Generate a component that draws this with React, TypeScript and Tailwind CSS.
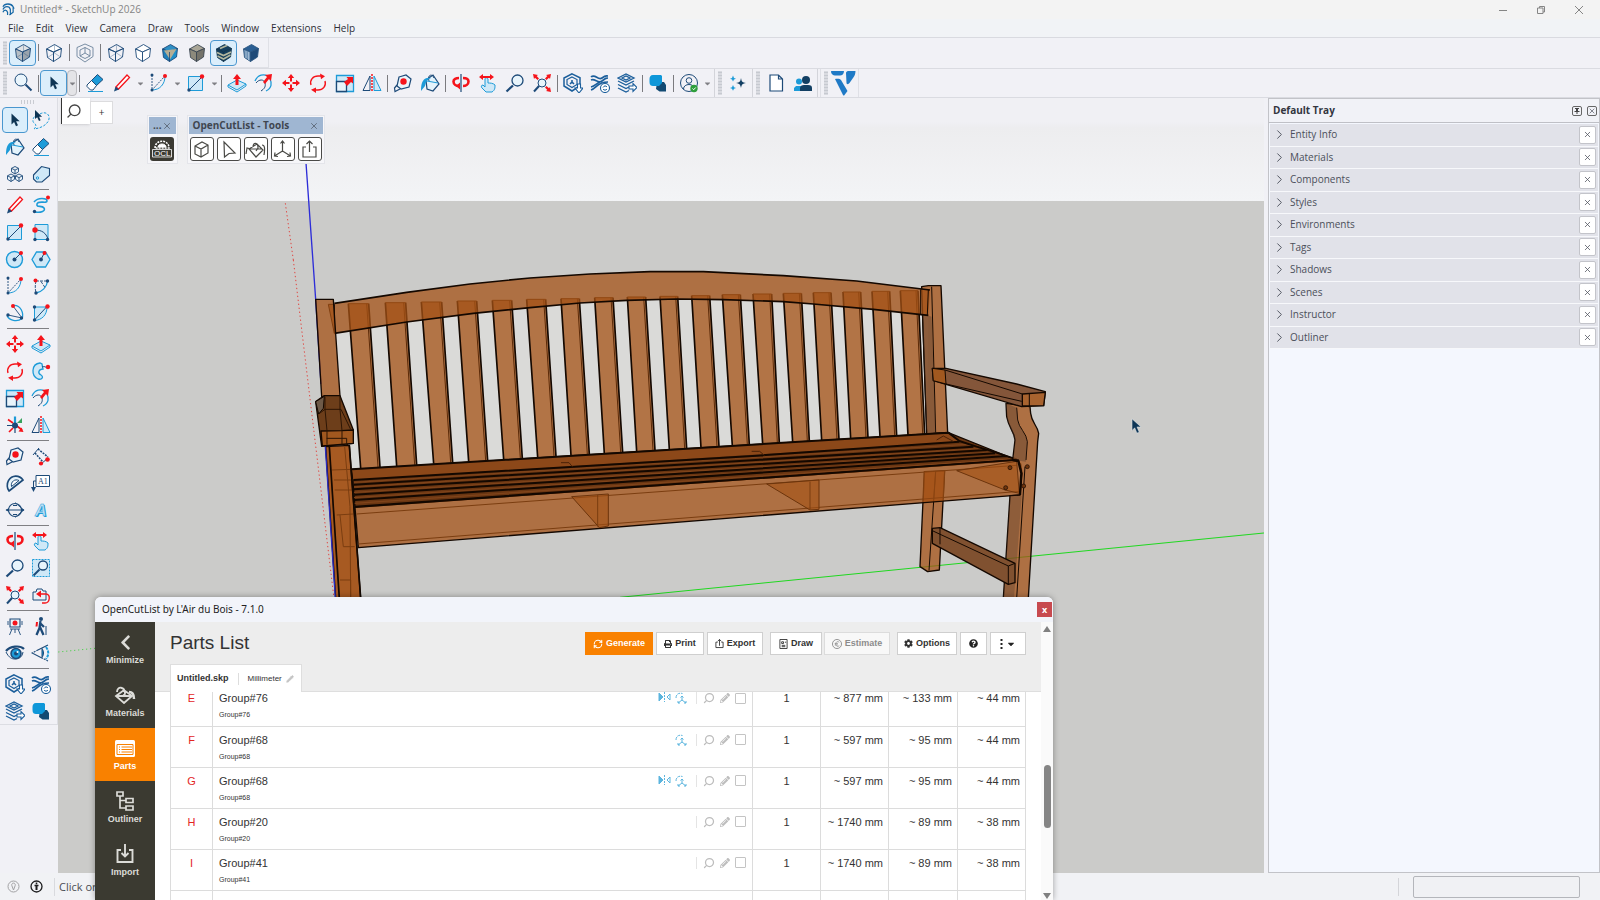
import React from "react";
import { ChevronRight, Pencil, RefreshCw, Search, X } from "lucide-react";
import { FaCaretDown, FaChevronLeft, FaCog, FaPencilAlt, FaPrint, FaQuestionCircle } from "react-icons/fa";

const NAVY = "#1d4a78";
const SKY = "#1d9bd8";
const PALE = "#cfe8f7";
const RED = "#f5141b";
const GREY = "#4a4a46";

function Cube({ top = "none", left = "none", right = "none", hidden = false, stroke = NAVY }) {
  return (
    <g stroke={stroke} strokeLinejoin="round" strokeWidth="0.9">
      <path d="M2.5 6 10.5 1.5 17.5 5.5 9.5 9Z" fill={top} />
      <path d="M2.5 6 9.5 9 9.5 18.5 3.5 14.5Z" fill={left} />
      <path d="M9.5 9 17.5 5.5 16.5 14 9.5 18.5Z" fill={right} />
      {hidden && <path d="M10.500 1.500V10L3.500 14.500M10.500 10l6 4" strokeWidth="0.5" opacity="0.7" fill="none" />}
    </g>
  );
}

function Dot({ x, y, c = NAVY, r = 1.7 }: { x: number; y: number; c?: string; r?: number }) {
  return <circle cx={x} cy={y} r={r} fill={c} stroke="none" />;
}

const ARROW = "M6.5 3.5v11l2.6-2.4 1.9 4.2 2-1-1.9-4h3.6Z";
const LENS = "M8 12.5 1.5 18.5";

const ICONS: Record<string, React.ReactNode> = {
  shaded: <Cube top="#dfe3e6" left="#b7bec4" right="#9aa4ad" hidden />,
  hiddenEdges: <Cube top="#fff" hidden />,
  xray: (
    <g stroke="#6b829b" strokeWidth="0.9">
      <path d="M10 1 18 4.500V13.500L10 19 2 13.500V4.500Z" />
      <path d="M10 4.500 15 7v6L10 15.500 5 13V7ZM10 4.500V10M10 10l5 3M10 10l-5 3" />
    </g>
  ),
  wireframe: <Cube hidden />,
  hiddenLine: <Cube top="#fff" left="#fff" right="#fff" />,
  textures: (
    <g>
      <Cube top="#2f8fc4" left="#1f7fb9" right="#1f8fca" />
      <path d="M4 7.500 16.500 6 10 16.500Z" fill="#b3ad94" />
      <path d="M9.500 9v9" stroke={NAVY} strokeWidth="0.800" />
    </g>
  ),
  monochrome: <Cube top="#a9a596" left="#8d8a7c" right="#75736a" stroke="#3c4752" />,
  striped: (
    <g>
      <Cube top="#16405e" left="#16405e" right="#16405e" stroke="#12364f" />
      <path d="M3 9.500 9.500 12.500 17 9M3.500 13l6 3 7-4M6 5.500l7-3" stroke="#b4b89f" strokeWidth="1.700" />
    </g>
  ),
  faded: (
    <g>
      <Cube top="#2b5f94" left="#6f93b6" right="#1f4a78" stroke="#2b5680" />
      <path d="M5 8v7M7.500 9v8" stroke="#9fb9d2" />
    </g>
  ),
  search: (
    <g stroke={NAVY}>
      <circle cx="8" cy="7" r="6" fill="#eaf5fc" />
      <path d="m12.500 11.500 6 6" strokeWidth="2" />
    </g>
  ),
  select: <path d={ARROW} fill="#0f3554" stroke="none" />,
  lasso: (
    <g>
      <path d="M9 4c5-3 10 0 9 5s-7 9-15 10c2-2 3-4 0-6-2-2-1-5 1-7" stroke={SKY} strokeDasharray="2.500 1.500" />
      <path d="M4 0v9l2.200-1.800L8 11l1.600-.8-1.500-3.400h3Z" fill="#0f3554" stroke="none" />
    </g>
  ),
  eraser: (
    <g>
      <path d="m2 12 4.500-4.500 5 5L8 17H5.500L2 13.500Z" fill="#fff" stroke={NAVY} />
      <path d="m6.500 7.500 6-6 5.500 5-6.500 6Z" fill={SKY} stroke={NAVY} />
      <path d="M3 18.500h15" stroke={SKY} />
    </g>
  ),
  line: (
    <g>
      <path d="m4 14 11-12 2.500 2.500L6.500 16Z" fill="#fff" stroke={RED} strokeWidth="1.300" />
      <path d="M2 18.500 3.500 13.500 7 16.500Z" fill={NAVY} stroke="none" />
    </g>
  ),
  freehand: (
    <g>
      <path d="M4 17c6 1 11-1 9-4S5 13 6 9s10 0 10-3-9-4-13 1" stroke={SKY} strokeWidth="1.600" />
      <Dot x={17} y={2.5} c={RED} r={2} />
      <Dot x={3.5} y={16.5} />
    </g>
  ),
  arc: (
    <g>
      <path d="M3 2v15L16 3" stroke={NAVY} strokeWidth="0.900" strokeDasharray="2 1" />
      <path d="M3 17c8 0 13-6 13-14" stroke={SKY} />
      <Dot x={3} y={2} r={1.5} />
      <Dot x={3} y={17} r={1.5} />
      <Dot x={16} y={3} c={RED} r={2} />
    </g>
  ),
  rectangle: (
    <g>
      <path d="M2.500 3.500h14v14h-14Z" fill={PALE} stroke={SKY} />
      <path d="M3 17 16 4" stroke={NAVY} />
      <Dot x={3} y={17} />
      <Dot x={16} y={3.5} c={RED} r={2.2} />
    </g>
  ),
  rotatedRect: (
    <g>
      <path d="M4 2.500h13v15H4Z" fill={PALE} stroke={SKY} />
      <path d="M4 8c7 0 11 3 13 9" stroke={NAVY} />
      <Dot x={4} y={8} c={RED} r={2.7} />
      <Dot x={4} y={17.5} />
      <Dot x={16.5} y={17.5} />
    </g>
  ),
  circle: (
    <g>
      <circle cx="9.500" cy="10.500" r="8" fill={PALE} stroke={SKY} strokeWidth="1.400" />
      <path d="m9.500 10.500 6-6" stroke={NAVY} />
      <Dot x={9.5} y={10.5} r={2} />
      <Dot x={16} y={4} c={RED} r={2} />
    </g>
  ),
  polygon: (
    <g>
      <path d="M5.500 3h9L19 10.500 14.500 18h-9L1 10.500Z" fill={PALE} stroke={SKY} strokeWidth="1.300" />
      <path d="m10 10.500 3-6" stroke={NAVY} />
      <Dot x={10} y={10.5} r={1.9} />
      <Dot x={13.5} y={4} c={RED} r={2} />
    </g>
  ),
  arc2: (
    <g>
      <path d="M16.500 5C16 11 11 16 5 17" stroke={SKY} strokeWidth="1.300" />
      <path d="m5 5 11.500 0M5 5c-1 4-1 8 0 12M10 5.500l4 6" stroke={NAVY} strokeWidth="0.900" strokeDasharray="3 1" />
      <Dot x={4.5} y={4.5} c={RED} r={2} />
      <Dot x={16.5} y={5} />
      <Dot x={5} y={17} />
    </g>
  ),
  arc3: (
    <g>
      <path d="M8 2.500c8-1 11 8 9 13-5 4-13 2-15-3" stroke={SKY} strokeWidth="1.300" />
      <path d="m8 3 9 12M3 12l14 3" stroke={NAVY} strokeWidth="0.900" />
      <Dot x={8} y={3} c={RED} r={2} />
      <Dot x={3} y={12} />
      <Dot x={16.5} y={15} />
    </g>
  ),
  pie: (
    <g>
      <path d="M3.500 4H16c0 8-5 13-12.500 13.500Z" fill={PALE} stroke={SKY} />
      <path d="m3.500 17 12-13" stroke={NAVY} />
      <Dot x={3.5} y={4} />
      <Dot x={3.5} y={17} />
      <Dot x={16.5} y={3.5} c={RED} r={2.2} />
    </g>
  ),
  pushPull: (
    <g>
      <path d="m1 12 9-5 9 4-9 6Z" fill={PALE} stroke={SKY} />
      <path d="M1 12v2l9 5 9-6V11" stroke={SKY} />
      <path d="M10 1 14 6h-2.500v6h-3V6H6Z" fill={RED} stroke="none" />
    </g>
  ),
  followMe: (
    <g>
      <path d="M9 2C0 3 0 15 7 18c4 1 6-2 3-4-4-2-2-6 2-6l-1-5Z" fill={PALE} stroke={SKY} strokeWidth="1.300" />
      <path d="M11 6c2-1 4 0 5 1" stroke={NAVY} />
      <Dot x={17} y={6} c={RED} r={2.2} />
    </g>
  ),
  offset: (
    <g>
      <path d="M1 8C4 1 10 1 14 3M12 18c6-3 6-8 4-12" stroke={SKY} strokeWidth="1.300" />
      <path d="M2 10c3-4 8-4 9 0s-1 6-4 8" stroke={NAVY} />
      <path d="m9 9 4-5-2-2 7-1-1 7-2-2-4 5Z" fill={RED} stroke="none" />
    </g>
  ),
  move: (
    <path
      d="m10 1 3.200 4H11v3.500H9V5H6.800ZM10 19l3.200-4H11v-3.500H9V15H6.800ZM1 10l4-3.200V9h3.500v2H5v2.200ZM19 10l-4-3.200V9h-3.500v2H15v2.200Z"
      fill={RED}
      stroke="none"
    />
  ),
  rotate: (
    <g stroke={RED} strokeWidth="1.400">
      <path d="M3 12C1.500 7 5 3 10 3h3M17 8c1.500 5-2 9-7 9H7" />
      <path d="m12 .5 5 2.800-4 3ZM8 14.500l-5 2.200L8 20Z" fill={RED} stroke="none" />
    </g>
  ),
  scale: (
    <g>
      <path d="M1.500 2.500h17v16h-17Z" fill={PALE} stroke={SKY} strokeWidth="1.300" />
      <path d="M1.500 8.500h10v10h-10Z" fill="#e9f4fb" stroke={NAVY} strokeWidth="1.300" />
      <path d="m9 9 4-3-1.500-2H18v6.500L16 9l-4 4Z" fill={RED} stroke="none" />
    </g>
  ),
  flip: (
    <g>
      <path d="M8 3v14.500H1Z" stroke={NAVY} />
      <path d="M12 3v14.500h7Z" stroke={SKY} fill={PALE} />
      <path d="M10 1v18" stroke={RED} strokeWidth="1.500" strokeDasharray="2 1" />
    </g>
  ),
  tape: (
    <g>
      <path d="M6 4 13 2l5 4-2 8-8 2-4-3Z" fill="#e9f4fb" stroke={NAVY} strokeWidth="1.200" />
      <path d="M4 12 1.500 15 2 18.500 7 16" stroke={NAVY} strokeWidth="1.200" />
      <Dot x={10.5} y={8.5} c={RED} r={3.2} />
    </g>
  ),
  paint: (
    <g>
      <path d="m6 7 7-5 6 9-6 7-6-2Z" fill="#e4f3fc" stroke={NAVY} strokeWidth="1.200" />
      <path d="M9 8C7 2 12 0 14 5" stroke={NAVY} />
      <path d="M1 18C1 8 4 4 11 5c-5 2-5 5-6 8Z" fill={SKY} stroke="none" />
      <path d="m7 8 11 2" stroke={SKY} />
    </g>
  ),
  orbit: (
    <g>
      <path d="M8 5C5 5 2.500 6 2.500 8.500S5 13 8 13M12 5c3 0 5.500 1 5.500 3.500S15 13 12 13" stroke={RED} strokeWidth="2.600" />
      <path d="m9 9.500 0 7-4-3.500Z" fill={RED} stroke="none" />
      <path d="M10 1v18" stroke={NAVY} strokeWidth="1.200" />
    </g>
  ),
  pan: (
    <g>
      <path d="M7 6v8l-2-2c-2 0-2 2-1 3l4 4h6c3-2 3-4 3-7-2-2-5-2-7-2V6c-1-2-3-1-3 0Z" fill={PALE} stroke={SKY} />
      <path d="m1 4 4-3v2h7V1l4 3-4 3V5H5v2Z" fill={RED} stroke="none" />
    </g>
  ),
  zoom: (
    <g stroke={NAVY}>
      <circle cx="12.500" cy="7.500" r="5.500" fill="#e8f4fb" strokeWidth="1.300" />
      <path d={LENS} strokeWidth="2.200" />
    </g>
  ),
  zoomWindow: (
    <g stroke={NAVY}>
      <path d="M1.500 1.500h17v17h-17Z" fill={PALE} stroke={SKY} strokeDasharray="2 1" />
      <circle cx="12" cy="7.500" r="4.500" fill="#e8f4fb" strokeWidth="1.300" />
      <path d="m8.500 11.500-6 6" strokeWidth="2" />
    </g>
  ),
  zoomExtents: (
    <g>
      <circle cx="10" cy="10" r="4" fill="#e8f4fb" stroke={NAVY} />
      <path d="m7 13-5 5.500" stroke={NAVY} strokeWidth="2" />
      <path d="m1 1 5 1-1.300 1L7 5.500 5.500 7 3 4.700 2 6ZM19 1l-5 1 1.300 1L13 5.500 14.500 7 17 4.700 18 6ZM19 19l-5-1 1.300-1L13 14.500l1.500-1.500 2.500 2.300 1-1.300Z" fill={RED} stroke="none" />
    </g>
  ),
  warehouse: (
    <g stroke="#1b5e9b" strokeWidth="1.500">
      <path d="m9 .8 8 4v8L9 18 1 13V5Z" />
      <path d="m9 4 5 2.500v5L9 14.500 4 11.500v-5Z" strokeWidth="1.200" />
      <path d="M9 7v2l2 2M9 9l-2 2" />
      <path d="M14.500 11h3v4H20l-4 5-4-5h2.500Z" fill="#fff" strokeWidth="1.100" />
    </g>
  ),
  extensions: (
    <g stroke="#1b5e9b" strokeWidth="1.700">
      <path d="M1 4c4-4 7 4 11 1s4-2 6-2M1 7c4-2 7 4 11 1s4-3 6-3M1 17c6-2 6-8 17-8M1 14c4-1 6-4 9-5" />
      <circle cx="15" cy="15" r="4.500" fill="#fff" strokeWidth="1.100" />
      <path d="M13 14.500c1-2 3-2 4-.5M17 16c-1 1.500-3 1.500-4 0" strokeWidth="1" />
    </g>
  ),
  layout: (
    <g stroke="#1b5e9b" strokeWidth="1.300">
      <path d="m1 5 8-4 8 4-8 4ZM1 8l8 4 8-4M1 11.500l8 4 3-1.500M1 15l8 4 3-1.500M5 5l4-2 4 2-4 2Z" />
      <path d="M12 13h4v-2.500l4 4-4 4V16h-4Z" fill="#fff" strokeWidth="1.100" />
    </g>
  ),
  chat: (
    <g stroke="none">
      <path d="M9 9h7l2 3v6.500h-6.500L8 16Z" fill="#124a73" />
      <path d="M5 2h8l1 1v7l-3 3H5c-2 0-3.500-1-3.500-4V6c0-2 1-4 3.500-4Z" fill="#0e97d9" />
    </g>
  ),
  account: (
    <g stroke={NAVY}>
      <circle cx="10" cy="10" r="8.500" />
      <circle cx="10" cy="7.500" r="2.800" />
      <path d="M4.500 16c0-6 11-6 11 0" />
      <circle cx="15" cy="15.500" r="3.700" fill="#2e9e3c" stroke="none" />
      <path d="m13.500 15.500 1.200 1.200 2-2.200" stroke="#fff" />
    </g>
  ),
  sparkle: (
    <g stroke="none">
      <path d="M13 5c.7 4 1.500 4.500 5 5-3.500.7-4.300 1.300-5 5-.7-3.700-1.500-4.300-5-5 3.500-.5 4.300-1 5-5Z" fill="#123f63" />
      <path d="M5 2.500 6 5l2 .8-2 .8-1 2-1-2-2-.8L4 5ZM5 12l1 2.200 2 .8-2 .8-1 2-1-2-2-.8 2-.8Z" fill={SKY} />
    </g>
  ),
  page: <path d="M4 2h8.500L16.500 6v12H4ZM12.500 2v4h4" stroke={NAVY} strokeWidth="1.200" fill="#fff" />,
  people: (
    <g stroke="none">
      <circle cx="6" cy="8.500" r="3" fill={SKY} />
      <path d="M1 18v-3l2-2h5v5Z" fill={SKY} />
      <circle cx="13" cy="7" r="4" fill="#123f63" />
      <path d="M7 18v-3c0-2 2-3 4-3h4c3 0 4 1 4 3v3Z" fill="#123f63" />
    </g>
  ),
  components: (
    <g stroke={NAVY} strokeWidth="0.900">
      {["M10 2.500", "M6 10", "M14 10"].map((at) => (
        <path key={at} d={`${at}l3.500 1.800v3.500l-3.500 2.200-3.500-2.200v-3.500Zm-3.500 1.800 3.500 1.800 3.500-1.800m-3.500 1.800v3.900`} fill="#e8f1f8" />
      ))}
    </g>
  ),
  tag: (
    <g>
      <path d="m2.500 11 8-8.500 8 2v7l-7.500 6.500H5.500l-3-3Z" fill={PALE} stroke={NAVY} strokeWidth="1.100" />
      <circle cx="6.500" cy="14" r="1.200" stroke={SKY} />
    </g>
  ),
  axes: (
    <g>
      <path d="M10 9V1.500" stroke={SKY} strokeWidth="2.200" />
      <path d="m12 8 5-5v5Z" fill="#37a35d" stroke="none" />
      <path d="m12 11 5 4M8 8 3 4.500M8 13l-4 4" stroke={RED} strokeWidth="1.700" />
      <path d="m18.500 17-5-.500 3-4Z" fill={RED} stroke="none" />
      <path d="M2 10.500h6M10 13v5" stroke={NAVY} strokeWidth="1.200" />
      <Dot x={10} y={10.5} r={3} />
    </g>
  ),
  dimension: (
    <g>
      <path d="M2 9 8 2M10 18l7-6" stroke={NAVY} />
      <path d="m4 7 8 9M7 3l10 8" stroke={NAVY} strokeWidth="1.500" strokeDasharray="2 1" />
      <Dot x={16.5} y={13.5} c={RED} r={2.3} />
      <Dot x={10} y={17.5} c={RED} r={2.1} />
    </g>
  ),
  protractor: (
    <g stroke={NAVY}>
      <path d="M4 18 18 7C14 1.500 7 2 3.500 7.500 1.500 11 2 15.500 4 18Z" fill="#e8f4fb" strokeWidth="1.600" />
      <path d="M6.500 13.500 14 7.500C10 5.500 5.500 8.500 6.500 13.500Z" fill="#fff" />
    </g>
  ),
  label: (
    <g>
      <path d="M5 2.500h13.500v11H5Z" fill="#fff" stroke={NAVY} />
      <path d="M5 8H2.500v8" stroke={NAVY} />
      <path d="m0 14 2.500 5L5 14Z" fill={NAVY} stroke="none" />
      <text x="7" y="11" fontSize="8" fontFamily="Liberation Serif, serif" fill={NAVY} stroke="none">A1</text>
    </g>
  ),
  section: (
    <g stroke={NAVY}>
      <circle cx="10" cy="10" r="6.500" strokeWidth="1.100" />
      <path d="M1 10h18M8 5.500h4M8 14.500h4" />
      <path d="M10 2.500 18.500 10 10 17.500" strokeWidth="0.800" />
      <path d="m16 7.500 3.500 2.500-3.500 2.500ZM4 8v4l-3.500-2Z" fill={NAVY} stroke="none" />
    </g>
  ),
  text3d: (
    <g fontSize="16" fontWeight="700" fontStyle="italic" fontFamily="Liberation Sans, sans-serif">
      <text x="5" y="17" fill={SKY}>A</text>
      <text x="4" y="16" fill="#bfe2f5" stroke={SKY} strokeWidth="0.500">A</text>
    </g>
  ),
  previous: (
    <g>
      <path d="M2 7h3l1-3h5l1 2h3v9H2Z" fill="#e8f1f8" stroke={NAVY} />
      <path d="M9 9h6c5 0 4 9-1 9h-3" stroke={RED} strokeWidth="1.400" />
      <path d="m10 5.500-5 3.500 5 3.500Z" fill={RED} stroke="none" />
    </g>
  ),
  camera: (
    <g>
      <path d="M5 3h10v8H5Z" fill="#e8f1f8" stroke={NAVY} strokeWidth="1.100" />
      <path d="M5 13h10M10 13v4M7 13l-2.500 6M13 13l2.500 6M3 5v4M17 5v4" stroke={NAVY} strokeWidth="0.900" />
      <Dot x={10} y={7} c={RED} r={2.5} />
    </g>
  ),
  walk: (
    <g>
      <circle cx="10" cy="3" r="2" fill={NAVY} stroke="none" />
      <path d="M9.500 5 8.500 12l-3 7M9 11l3.500 8M9 7l4 4" stroke={NAVY} strokeWidth="2.300" />
      <path d="M15 10v9" stroke={NAVY} />
      <path d="M6 6 5.500 10.500" stroke={RED} strokeWidth="2" />
    </g>
  ),
  look: (
    <g>
      <path d="M1 8C5 3 15 2 19 6" stroke={NAVY} strokeWidth="2.200" />
      <path d="M1 9c3 6 6 7 9 7s7-1 8-7" stroke={NAVY} />
      <circle cx="11" cy="10.500" r="5" fill={SKY} stroke={NAVY} strokeWidth="1.500" />
      <Dot x={11} y={10.5} r={2} />
      <Dot x={12.5} y={9} c="#fff" r={1} />
    </g>
  ),
  fieldOfView: (
    <g>
      <path d="M17 2 1 10l16 8" stroke={NAVY} strokeWidth="1.100" strokeDasharray="13 1 2 1" />
      <path d="M11 5.500v9c2-3 2-6 0-9Z" fill={SKY} stroke={NAVY} />
      <path d="M15 4c3 4 3 8 0 12" stroke={SKY} strokeWidth="2" strokeDasharray="3 1" />
    </g>
  ),
};

type Tool = { id: string; label: string; on?: boolean; menu?: boolean } | "|";

const STYLE_TOOLS: Tool[] = [
  { id: "shaded", label: "X-ray", on: true }, "|",
  { id: "hiddenEdges", label: "Back edges" }, "|",
  { id: "xray", label: "Hidden objects" }, "|",
  { id: "wireframe", label: "Wireframe" },
  { id: "hiddenLine", label: "Hidden line" },
  { id: "textures", label: "Shaded" },
  { id: "monochrome", label: "Monochrome" },
  { id: "striped", label: "Shaded with textures", on: true },
  { id: "faded", label: "Photoreal" },
];

const MAIN_TOOLS: Tool[] = [
  { id: "search", label: "Search" }, "|",
  { id: "select", label: "Select", on: true, menu: true }, "|",
  { id: "eraser", label: "Eraser" },
  { id: "line", label: "Line", menu: true },
  { id: "arc", label: "Arc", menu: true },
  { id: "rectangle", label: "Rectangle", menu: true }, "|",
  { id: "pushPull", label: "Push/Pull" },
  { id: "offset", label: "Offset" },
  { id: "move", label: "Move" },
  { id: "rotate", label: "Rotate" },
  { id: "scale", label: "Scale" },
  { id: "flip", label: "Flip" }, "|",
  { id: "tape", label: "Tape measure" },
  { id: "paint", label: "Paint" }, "|",
  { id: "orbit", label: "Orbit" },
  { id: "pan", label: "Pan" },
  { id: "zoom", label: "Zoom" },
  { id: "zoomExtents", label: "Zoom extents" }, "|",
  { id: "warehouse", label: "3D Warehouse" },
  { id: "extensions", label: "Extension Warehouse" },
  { id: "layout", label: "Send to LayOut" }, "|",
  { id: "chat", label: "Feedback" }, "|",
  { id: "account", label: "Account", menu: true },
];

// Each group is a list of icon ids, laid out two to a row
const PALETTE = [
  ["select", "lasso", "paint", "eraser", "components", "tag"],
  ["line", "freehand", "rectangle", "rotatedRect", "circle", "polygon", "arc", "arc2", "arc3", "pie"],
  ["move", "pushPull", "rotate", "followMe", "scale", "offset", "axes", "flip"],
  ["tape", "dimension", "protractor", "label", "section", "text3d"],
  ["orbit", "pan", "zoom", "zoomWindow", "zoomExtents", "previous"],
  ["camera", "walk", "look", "fieldOfView"],
  ["warehouse", "extensions", "layout", "chat"],
];

const MENUS = ["File", "Edit", "View", "Camera", "Draw", "Tools", "Window", "Extensions", "Help"];

const TRAY = [
  "Entity Info", "Materials", "Components", "Styles", "Environments",
  "Tags", "Shadows", "Scenes", "Instructor", "Outliner",
];

const PARTS = [
  { letter: "E", name: "Group#76", flip: true, turn: true, dims: ["877", "133", "44"] },
  { letter: "F", name: "Group#68", flip: false, turn: true, dims: ["597", "95", "44"] },
  { letter: "G", name: "Group#68", flip: true, turn: true, dims: ["597", "95", "44"] },
  { letter: "H", name: "Group#20", flip: false, turn: false, dims: ["1740", "89", "38"] },
  { letter: "I", name: "Group#41", flip: false, turn: false, dims: ["1740", "89", "38"] },
];

function Icon({ id }: { id: string }) {
  return (
    <svg viewBox="0 0 20 20" className="size-5 shrink-0" fill="none" aria-hidden="true">
      {ICONS[id]}
    </svg>
  );
}

function ToolButton({ id, label, on }: { id: string; label: string; on?: boolean }) {
  return (
    <button
      aria-label={label}
      className={`flex h-[26px] w-full items-center justify-center rounded ${on ? "border border-[#4a97cf] bg-[#dbeefb]" : ""}`}
    >
      <Icon id={id} />
    </button>
  );
}

function Grip() {
  return (
    <span className="flex w-[9px] shrink-0 justify-center">
      <span className="h-6 w-1 bg-[radial-gradient(#c6c9d0_0.7px,transparent_1px)] bg-[size:2px_3px]" />
    </span>
  );
}

function ToolStrip({ tools }: { tools: Tool[] }) {
  return (
    <>
      <Grip />
      {tools.map((tool, i) =>
        tool === "|" ? (
          <span key={i} className="flex w-1 justify-center">
            <span className="h-[17px] w-px bg-[#7b7b7f]" />
          </span>
        ) : (
          <React.Fragment key={tool.id}>
            <span className="w-[27px]">
              <ToolButton id={tool.id} label={tool.label} on={tool.on} />
            </span>
            {tool.menu && (
              <button
                aria-label={`${tool.label} options`}
                className={`flex h-[26px] w-[10px] items-center justify-center rounded-sm text-[#808085] ${
                  tool.id === "select" ? "border border-[#b9b9bd] bg-[#e4e4e7]" : ""
                }`}
              >
                <FaCaretDown size={9} className="shrink-0" />
              </button>
            )}
          </React.Fragment>
        )
      )}
    </>
  );
}

function TitleBar() {
  return (
    <header>
      <div className="flex h-[19px] items-center gap-[5px] bg-[#f3f3f3] pl-[2px] text-[10px] text-[#858585]">
        <svg viewBox="0 0 14 14" className="size-[13px]" fill="none" stroke="#1668a6" strokeWidth="1.300" aria-hidden="true">
          <path d="M1 4C3 0 10 0 12 4v6l-4 3M1 7c2-4 7-4 8 0v6M1 10c1-3 4-3 5 0v3M3 2c4-2 9 0 10 4" />
        </svg>
        <span className="flex-1">Untitled* - SketchUp 2026</span>
        <div className="flex w-[107px] justify-between pr-[11px] text-[#858585]">
          <button aria-label="Minimize window" className="flex h-[18px] w-5 items-center justify-center">
            <svg viewBox="0 0 10 10" className="size-[10px]" stroke="currentColor"><path d="M1 5.500h8" /></svg>
          </button>
          <button aria-label="Restore window" className="flex h-[18px] w-5 items-center justify-center">
            <svg viewBox="0 0 10 10" className="size-[10px]" fill="none" stroke="currentColor">
              <path d="M1.500 3h5.500v5.500h-5.500ZM3.500 3v-1.500h5v5.500h-1.500" />
            </svg>
          </button>
          <button aria-label="Close window" className="flex h-[18px] w-5 items-center justify-center">
            <svg viewBox="0 0 10 10" className="size-[10px]" stroke="currentColor"><path d="m1 1 8 8M9 1 1 9" /></svg>
          </button>
        </div>
      </div>
      <nav className="flex h-[18px] items-center gap-3 bg-[#f1f3f6] pl-2 text-[10px] text-[#2d2f36]">
        {MENUS.map((menu) => (
          <button key={menu}>{menu}</button>
        ))}
      </nav>
    </header>
  );
}

function Toolbars() {
  return (
    <div className="bg-[#f1f1f6]">
      <div className="flex h-[31px] border-t border-[#d9dae0]">
        <div className="flex items-center border-r border-b border-[#dfe0e6] pr-1">
          <ToolStrip tools={STYLE_TOOLS} />
        </div>
      </div>
      <div className="flex h-[30px] border-y border-[#dadbe1]">
        <div className="flex items-center border-r border-[#d3d4da] pr-[2px]">
          <ToolStrip tools={MAIN_TOOLS} />
        </div>
        <div className="flex items-center border-r border-[#d3d4da] pr-px">
          <ToolStrip tools={[{ id: "sparkle", label: "AI assistant" }]} />
        </div>
        <div className="mr-[2px] flex items-center border-r border-[#d3d4da] pr-px">
          <ToolStrip tools={[{ id: "page", label: "New page" }, { id: "people", label: "Share" }]} />
        </div>
        <div className="flex items-center border-x border-[#dfe0e6]">
          <Grip />
          <button aria-label="Volumatic" className="w-[28px]">
            <svg viewBox="0 0 26 26" className="size-[26px]" fill="#1f7ac6" aria-hidden="true">
              <path d="M1 2c0-1 0-1 1-1h12c0 3-2 4.500-4 4.500H5C3 5.500 1.500 4 1 2ZM16 3c0-1 1-2 2-2h7.500c0 3-1 5-2.500 7l-3.500 5c-1 1.500-3 1.500-3 0ZM5 9c2-.5 5-.5 6 1l6.500 11-3 4c-.5.800-1 .8-1.500 0Z" />
            </svg>
          </button>
        </div>
      </div>
    </div>
  );
}

function Palette() {
  return (
    <aside className="flex w-[58px] shrink-0 flex-col bg-[#f1f1f6]">
      <div className="flex flex-col border-r border-b border-[#dcdde3] pr-[3px] pl-[2px]">
        <span className="flex h-2 items-center justify-center">
          <span className="h-1 w-4 bg-[radial-gradient(#c0c3ca_0.7px,transparent_1px)] bg-[size:3px_2px]" />
        </span>
        {PALETTE.map((group, g) => (
          <React.Fragment key={g}>
            {g > 0 && (
              <span className="flex h-1 items-center px-[5px]">
                <span className="h-px w-full bg-[#808084]" />
              </span>
            )}
            <div className="grid grid-cols-2">
              {group.map((id) => (
                <span key={id} className="flex h-[27px] items-center">
                  <ToolButton id={id} label={id} on={id === "select"} />
                </span>
              ))}
            </div>
          </React.Fragment>
        ))}
      </div>
    </aside>
  );
}

// [top left x, top right x, top y, bottom left x, bottom right x]
const SLATS = [
  [175, 236, 131, 212, 270], [286, 347, 128, 320, 380], [394, 455, 126, 431, 488],
  [502, 560, 123, 536, 593], [607, 665, 121, 641, 697], [710, 767, 118, 743, 798],
  [813, 868, 116, 843, 898], [914, 969, 113, 943, 998], [1012, 1067, 111, 1040, 1095],
  [1110, 1163, 109, 1138, 1190], [1205, 1259, 107, 1233, 1287], [1297, 1351, 104, 1327, 1378],
  [1389, 1445, 102, 1418, 1468], [1480, 1534, 100, 1508, 1558], [1570, 1623, 98, 1595, 1647],
  [1659, 1712, 96, 1682, 1734], [1746, 1799, 94, 1770, 1820], [1831, 1884, 92, 1854, 1904],
];

const seatY = (x: number) => 626 - ((x - 190) * 108) / 1783;

const RAIL_TOP = "133,130 350,97 540,72 720,54 900,42 1080,35 1240,35 1480,47 1700,63 1920,90";
const RAIL_BOTTOM = "1915,166 1750,148 1570,132 1480,125 1300,119 1160,117 1010,121 870,129 720,143 550,160 350,186 133,220";

function Bench() {
  const wood = "rgba(164,81,21,0.75)";
  return (
    <g strokeLinejoin="round" stroke="#140800" strokeWidth="4" fill={wood}>
      <polygon points={`137,222 ${RAIL_BOTTOM.split(" ").reverse().join(" ")} 1910,522 182,626 150,408`} fill="#dadad8" stroke="none" />
      {/* back right post */}
      <polygon points="1895,80 1915,77 1953,77 1973,518 1910,522" />
      <path d="M1925 80 1937 518M1897 160 1910 518" fill="none" strokeWidth="3" />
      <path d="M1897 160 1925 170 1937 518 1910 520Z" fill="rgba(70,50,40,0.35)" stroke="none" />
      <polygon points="1903,635 1890,920 1913,935 1948,930 1964,632" />
      <path d="M1937 635 1917 932" fill="none" strokeWidth="3" />
      {/* back slats, each continuing up behind the rail */}
      {SLATS.map(([tl, tr, ty, bl, br]) => (
        <g key={tl}>
          <polygon points={`${tl},${ty} ${tr},${ty} ${br},${seatY(br)} ${bl},${seatY(bl)}`} stroke="none" />
          <path d={`M${tl} ${ty} ${bl} ${seatY(bl)}M${tr} ${ty} ${br} ${seatY(br)}`} strokeWidth="5" />
          <path d={`M${tr - 6} ${ty} ${br - 6} ${seatY(br)}M${tl} ${ty}H${tr}`} fill="none" stroke="#5b2a08" strokeWidth="3" />
        </g>
      ))}
      <polygon points={`${RAIL_TOP} ${RAIL_BOTTOM}`} stroke="none" />
      <polyline points={RAIL_TOP} fill="none" strokeWidth="5" />
      <polyline points={RAIL_BOTTOM} fill="none" strokeWidth="5" />
      <path d="M133 220 115 133H133ZM1892 88v76M1915 90l-3 76" strokeWidth="3" />
      {/* back left post */}
      <polygon points="77,118 130,118 137,222 150,408 95,410" />
      <path d="M150 408 182 626" fill="none" />
      {/* seat */}
      <polygon points="186,628 1975,518 2180,600 195,742" fill="#6a3612" />
      <polygon points="186,628 1975,518 2008,545 190,660" fill="#8c4819" stroke="none" />
      <path d="M192 667 2030 553M192 681 2065 566M192 697 2100 578M192 713 2140 588M192 730 2170 597" stroke="#7f431a" strokeWidth="4" />
      <path
        d="M190 660 1400 587 2008 545M191 674 2050 560M192 688 2090 570M193 704 2115 580M194 720 2150 588M195 740 2180 600M186 628 1975 518 2008 543 2060 560 2110 575 2180 598"
        fill="none"
        strokeWidth="6"
      />
      <path d="M813 608h24l10 12M1385 574h24l14 12M1940 540l20-12 30 16" fill="none" stroke="#4a2208" strokeWidth="3" />
      {/* apron with its braces */}
      <polygon points="195,742 2180,600 2192,612 2196,640 2190,705 205,863" />
      <path d="M200 762 2180 616M205 852 2190 694" fill="none" stroke="#7a3d10" strokeWidth="3" />
      <polygon points="845,710 955,702 955,798 928,803" fill="rgba(164,81,21,0.6)" stroke="#6b340c" strokeWidth="3" />
      <polygon points="1430,672 1587,660 1587,748 1560,750" fill="rgba(164,81,21,0.6)" stroke="#6b340c" strokeWidth="3" />
      <polygon points="2000,632 2180,604 2188,700 2145,690" fill="rgba(164,81,21,0.6)" stroke="#6b340c" strokeWidth="3" />
      <path d="M923 705v95M1560 665v84M1903 635l-3 86M1937 633l-6 86M1964 632l-4 84" fill="none" stroke="#7a3d10" strokeWidth="3" />
      <polygon points="1903,635 1964,632 1960,722 1900,725" fill="rgba(164,81,21,0.4)" stroke="none" />
      {/* right front leg */}
      <path d="M2148 430 2150 470Q2154 490 2164 508T2175 540L2168 600 2185 600 2195 640 2190 705 2160 707 2140 1015H2215L2243 545 2246 520Q2244 508 2234 492T2222 460L2220 440Z" />
      <path d="M2180 443 2183 480Q2186 496 2198 512T2212 545L2208 600M2205 620 2180 1015" fill="none" strokeWidth="3" />
      <path d="M2148 430 2152 480 2175 540 2170 600 2208 605 2212 540 2185 490 2180 443Z" fill="rgba(70,50,40,0.35)" stroke="none" />
      <path d="M2160 707 2140 1015H2172L2195 707Z" fill="rgba(70,50,40,0.3)" stroke="none" />
      <path d="M2168 600 2185 603 2194 640 2190 705" fill="none" strokeWidth="7" />
      {[[2160, 623], [2212, 620], [2147, 683], [2201, 678]].map(([x, y]) => (
        <circle key={x} cx={x} cy={y} r="6" fill="#70350d" strokeWidth="2" />
      ))}
      {/* stretcher */}
      <polygon points="1927,805 1950,803 2175,910 2175,968 2155,973 1927,850" fill="#805130" />
      <path d="M1950 803v50M1927 812 2155 918V973M2155 918l20-8" fill="none" strokeWidth="3" />
      {/* right armrest */}
      <polygon points="1927,325 1968,325 2180,372 2266,395 2261,437 2195,440 1930,362" fill="#84563a" />
      <polygon points="1927,325 1965,330 1968,372 1930,362" fill="#a1581f" strokeWidth="3" />
      <polygon points="2197,402 2266,397 2261,437 2197,438" fill="#a8632f" strokeWidth="4" />
      <path d="M1965 330 2197 402M1968 372 2195 424M2218 402v36" fill="none" strokeWidth="3" />
      {/* left front leg and armrest */}
      <polygon points="107,560 178,556 212,1015 137,1015" fill="#a75a22" />
      <path d="M118 560 148 1015M164 560 180 740 182 1015M126 630 186 628M140 765 190 762M150 765 160 860H194M132 660H188M134 690H188M150 960h32v55" fill="none" stroke="#7a3d10" strokeWidth="3" />
      <path d="M118 560 148 1015M178 556 212 1015" fill="none" strokeWidth="5" />
      <polygon points="77,425 103,407 150,407 190,510 190,550 95,559" fill="#6d3e1a" />
      <polygon points="77,425 103,409 100,445 86,462" fill="#6e5a48" strokeWidth="3" />
      <polygon points="93,513 155,512 190,510 190,550 97,558" fill="#a1581f" strokeWidth="4" />
      <path d="M86 462 105 448H153L182 508M105 410v38l6 64v42M150 410v38l6 64v42M110 535h60v20" fill="none" stroke="#2c1504" strokeWidth="3" />
    </g>
  );
}

function Scene() {
  return (
    <svg className="block size-full" aria-label="Model view of a garden bench">
      <rect y="103" width="100%" height="100%" fill="#cbcbc9" />
      {/* origin sits at the top left of the model, drawn at three units to a pixel */}
      <g transform="translate(232 162) scale(0.33333)" fill="none">
        <path d="M10 0-15-177M10 0l122 1015" stroke="#e0443f" strokeWidth="3" strokeDasharray="4 8" />
        <path d="M-695 1176l120-12" stroke="#35d035" strokeWidth="3" strokeDasharray="3 9" />
        <path d="M990 1012 2922 819" stroke="#1fd81f" strokeWidth="3" />
        <path d="M48-291 77 118 93 372" stroke="#2d2dd8" strokeWidth="4" />
        <Bench />
        <path d="M106 560 136 1015" stroke="#2a2ac0" strokeWidth="4" />
      </g>
    </svg>
  );
}

function ToolbarWindow({ title, children }: { title: string; children: React.ReactNode }) {
  return (
    <div className="border border-[#e4e5ea] bg-[#f6f6f9] p-px">
      <div className="flex h-[17px] items-center justify-between bg-[#9fb6d2] px-1 text-[10px] font-bold text-[#3f4650]">
        {title}
        <button aria-label={`Close ${title}`}><X size={10} strokeWidth={1.5} /></button>
      </div>
      <div className="flex gap-[3px] px-px pt-[3px] pb-px">{children}</div>
    </div>
  );
}

const OCL_TOOLS = [
  { label: "Smart draw", d: "m4 7 7-4 6 3v8l-7 4-6-3Zm0 0 6 3 7-4m-7 4v8" },
  { label: "Smart select", d: "m6 3 11 11-6 .5L6.500 18Z" },
  { label: "Smart paint", d: "m4 10 8-5 6 6-7 7ZM4 10l13 0M1 15l1-6 4 1M8 8c0-5 5-5 5 1l-2 3M17 6c3 0 3 4 2 10" },
  { label: "Smart axes", d: "M10.500 2v10m0 0-8 5m8-5 8 5M8.500 4.500l2-2.500 2 2.500M3 13.500 2.500 17l3.500.5M18 13.500l.5 3.500-3.500.5" },
  { label: "Smart export", d: "M7 8H4v10h13V8h-3M10.500 13V2M7.500 5l3-3 3 3" },
];

function Viewport() {
  return (
    <main className="relative min-w-0 flex-1 overflow-hidden bg-gradient-to-b from-[#f0f0f4] from-[24px] via-[#ededef] via-[30px] to-[#f3f4f6] to-[104px]">
      <Scene />
      <div className="absolute top-0 left-[3px] flex items-end">
        <button aria-label="Search scenes" className="flex h-[26px] w-[29px] items-center justify-center border-l border-l-[#333] bg-white pr-1 text-[#444] shadow-sm">
          <Search size={16} strokeWidth={2} className="-scale-x-100" />
        </button>
        <button aria-label="Add scene" className="flex h-[23px] w-[23px] items-center justify-center border border-[#dcdcde] bg-white text-[10px] text-[#333]">
          +
        </button>
      </div>
      <div className="absolute top-[17px] left-[89px] flex items-start gap-[9px]">
        <ToolbarWindow title="...">
          <button aria-label="OpenCutList" className="flex size-6 items-center justify-center rounded-[3px] bg-[#3b3a33]">
            <svg viewBox="0 0 24 24" className="size-6" fill="none" stroke="#fff" aria-hidden="true">
              <path d="M5 11c0-9 14-9 14 0Z" strokeWidth="1.500" strokeDasharray="2 1" />
              <path d="M8 10c0-4 8-4 8 0Z" fill="#fff" />
              <path d="M2.500 12.500h19v7.500h-19Z" strokeWidth="0.800" />
              <text x="4" y="19" fontSize="8" fontFamily="Liberation Sans, sans-serif" fill="#fff" stroke="none">OCL</text>
            </svg>
          </button>
        </ToolbarWindow>
        <ToolbarWindow title="OpenCutList - Tools">
          {OCL_TOOLS.map((tool) => (
            <button key={tool.label} aria-label={tool.label} className="flex size-6 items-center justify-center rounded-[3px] border border-[#4a4a48] bg-white">
              <svg viewBox="0 0 21 21" className="size-[21px] shrink-0" fill="none" stroke={GREY} strokeWidth="1.200" aria-hidden="true">
                <path d={tool.d} />
              </svg>
            </button>
          ))}
        </ToolbarWindow>
      </div>
      <svg viewBox="0 0 12 18" className="absolute top-[320px] left-[1073px] h-[16px] w-[11px]" aria-hidden="true">
        <path d="M1 1v13l3-3 2.500 6 2.500-1L6.500 10H11Z" fill="#0d3556" stroke="#e9eef2" strokeWidth="0.500" />
      </svg>
    </main>
  );
}

function Tray() {
  return (
    <aside className="ml-1 flex w-[332px] shrink-0 flex-col border border-[#c2c3c8] bg-[#f4f7fe] text-[10px] text-[#4b4f5a]">
      <div className="flex h-[24px] items-center justify-between border-b border-[#bfc0c6] bg-[#f1f2f7] pr-[2px] pl-1">
        <h2 className="font-bold text-[#33363f]">Default Tray</h2>
        <div className="flex gap-[5px]">
          <button aria-label="Pin tray" className="flex size-[10px] items-center justify-center rounded-xs border border-[#666]">
            <svg viewBox="0 0 8 8" className="size-2" stroke="#444" aria-hidden="true"><path d="M2 1.500h4M4 4v3M1.500 4.500h5M3.500 2v2M4.500 2v2" /></svg>
          </button>
          <button aria-label="Close tray" className="flex size-[10px] items-center justify-center rounded-xs border border-[#666]">
            <X size={8} />
          </button>
        </div>
      </div>
      <ul className="grid h-[226px] grid-rows-10 pt-px pr-px pl-px">
        {TRAY.map((name) => (
          <li key={name} className="flex items-center border-b border-[#f7f8fb] bg-[#e1e2e9] pr-[2px] pl-[2px]">
            <button className="flex flex-1 items-center gap-[3px] text-left">
              <ChevronRight size={15} strokeWidth={1.5} />
              {name}
            </button>
            <button aria-label={`Close ${name}`} className="flex h-[18px] w-[17px] items-center justify-center rounded-xs border border-[#c3c4ca] bg-white">
              <X size={9} strokeWidth={2} />
            </button>
          </li>
        ))}
      </ul>
    </aside>
  );
}

function StatusBar() {
  return (
    <footer className="flex h-[27px] shrink-0 items-center bg-[#f1f2f5] pr-5 text-[11px] text-[#4a4c52]">
      <svg viewBox="0 0 13 13" className="ml-[7px] size-[13px]" fill="none" stroke="#a2a2a4" aria-hidden="true">
        <circle cx="6.500" cy="6.500" r="5.500" />
        <path d="M6.500 10 4.800 5.500a1.800 1.800 0 1 1 3.400 0Z" />
      </svg>
      <svg viewBox="0 0 13 13" className="ml-[10px] size-[13px]" fill="none" stroke="#1c1c1e" strokeWidth="1.300" aria-hidden="true">
        <circle cx="6.500" cy="6.500" r="5.500" />
        <path d="M6.500 5v5" strokeWidth="2" />
        <path d="M6.500 2.600v1.600M4.500 5.500h4" strokeWidth="1.600" />
      </svg>
      <span className="mr-1 ml-[11px] h-[18px] w-px bg-[#d9dade]" />
      <span className="flex-1 pt-px">Click or</span>
      <span className="mr-[14px] h-[18px] w-px bg-[#d4d5d9]" />
      <input aria-label="Measurements" className="h-[22px] w-[167px] rounded-xs border border-[#b4b6bb] bg-[#f0f1f4] px-1" />
    </footer>
  );
}

const NAV = [
  { label: "Minimize", icon: <FaChevronLeft size={17} /> },
  {
    label: "Materials",
    icon: (
      <svg viewBox="0 0 22 18" className="h-[18px] w-[22px]" fill="none" stroke="currentColor" strokeWidth="1.800">
        <path d="m2 10 8-6 8 6-8 7ZM2 10h15M3 6c0-6 8-6 8 2l-2 2" />
        <path d="M15 6c4 0 5 3 5 7" strokeWidth="2.500" />
      </svg>
    ),
  },
  {
    label: "Parts",
    icon: (
      <svg viewBox="0 0 20 17" className="h-[17px] w-5" fill="currentColor">
        <rect width="20" height="17" rx="1.500" />
        <path d="M2 4.500h16v10H2ZM4 7h1M4 9.500h1M4 12h1M6.500 7H17M6.500 9.500H17M6.500 12H17" fill="none" stroke="#f98100" />
      </svg>
    ),
  },
  {
    label: "Outliner",
    icon: (
      <svg viewBox="0 0 20 20" className="size-5" fill="none" stroke="currentColor" strokeWidth="1.700">
        <path d="M2 1h6v4H2ZM11 7.500h7v4h-7ZM11 15h7v4h-7ZM5 5v12h6M5 9.500h6" />
      </svg>
    ),
  },
  {
    label: "Import",
    icon: (
      <svg viewBox="0 0 20 20" className="size-5" fill="none" stroke="currentColor" strokeWidth="1.900">
        <path d="M6 6H2.500v12h15V6H14M10 0v12M6.500 9l3.500 3.500L13.500 9" />
      </svg>
    ),
  },
];

function HeadButton({ children, label, className }: { children: React.ReactNode; label?: string; className: string }) {
  return (
    <button
      aria-label={label}
      className={`flex h-[23px] items-center justify-center gap-[3px] border text-[9px] font-bold ${className}`}
    >
      {children}
    </button>
  );
}

function PartRow({ part }: { part: (typeof PARTS)[number] }) {
  return (
    <tr className="h-[41px] border-b border-[#dcdcdc] align-top">
      <td className="border-x border-[#dcdcdc] pt-[5px] text-center text-[#e3261f]">{part.letter}</td>
      <td className="border-r border-[#dcdcdc] pt-[5px] pr-[6px] pl-[6px]">
        <div className="flex h-4 items-center text-[#bdbdbd]">
          <span className="flex-1 text-[#333]">{part.name}</span>
          <span className="flex gap-1 pr-[9px] text-[#5cb5de]">
            {part.flip && (
              <svg viewBox="0 0 13 10" className="h-[10px] w-[13px]" fill="none" stroke="currentColor" aria-label="Flipped">
                <path d="M1 1v8l4-4Z" fill="currentColor" />
                <path d="M6.500 0v10" strokeDasharray="2 1" />
                <path d="M12 2v6L9 5Z" />
              </svg>
            )}
            {part.turn && (
              <svg viewBox="0 0 12 12" className="size-3" fill="none" stroke="currentColor" aria-label="Oriented">
                <path d="M1 6C1 2 4 .5 7.500 1.500" strokeDasharray="3 1" />
                <path d="M7 4v4l-4 3M7 8l4 3M5.500 5.500 7 4l1.500 1.500M3 9v2h2M11 9v2H9" />
              </svg>
            )}
          </span>
          <span className="flex items-center gap-[5px] border-l border-[#e4e4e4] pl-[6px]">
            <button aria-label="Highlight part">
              <Search size={12} strokeWidth={2.5} className="-scale-x-100" />
            </button>
            <button aria-label="Edit part"><FaPencilAlt size={10} /></button>
            <input type="checkbox" aria-label={`Select ${part.name}`} className="size-[11px] appearance-none rounded-[1px] border border-[#c4c4c4]" />
          </span>
        </div>
        <div className="mt-1 text-[7px] leading-[10px]">{part.name}</div>
      </td>
      <td className="border-r border-[#dcdcdc] pt-[5px] text-center">1</td>
      {part.dims.map((dim, i) => (
        <td key={i} className="border-r border-[#dcdcdc] pt-[5px] pr-[5px] text-right">~ {dim} mm</td>
      ))}
    </tr>
  );
}

function CutListWindow() {
  return (
    <section className="absolute bottom-0 left-[95px] flex h-[303px] w-[958px] flex-col overflow-hidden rounded-t-md bg-white shadow-[0_0_6px_rgba(0,0,0,0.35)]">
      <div className="flex h-[25px] shrink-0 items-center justify-between bg-[#f2f4fa] pl-[7px] font-['Noto_Sans','Open_Sans',sans-serif] text-[10px] text-[#222]">
        <span>OpenCutList by L'Air du Bois - 7.1.0</span>
        <button aria-label="Close OpenCutList" className="mr-px flex size-[15px] items-center justify-center bg-[#c74a4f] text-[9px] font-bold text-white">
          x
        </button>
      </div>
      <div className="flex min-h-0 flex-1 font-['Liberation_Sans',Arial,sans-serif]">
        <nav className="w-[60px] shrink-0 bg-[#3b3a31] text-[9px] font-bold text-[#dcdcd8]">
          {NAV.map((item) => (
            <button
              key={item.label}
              className={`flex h-[53px] w-full flex-col items-center gap-[2px] pt-[10px] ${item.label === "Parts" ? "bg-[#f98100] text-white" : ""}`}
            >
              <span className="flex h-5 items-center">{item.icon}</span>
              <span className="leading-3">{item.label}</span>
            </button>
          ))}
        </nav>
        <div className="flex min-w-0 flex-1 flex-col">
          <div className="flex h-[70px] shrink-0 flex-col justify-between border-b border-[#dedede] bg-[#ededed] px-[15px]">
            <div className="flex items-start justify-between pt-[10px]">
              <h1 className="text-[19px] leading-[22px] text-[#333]">Parts List</h1>
              <div className="flex gap-[7px]">
                <div className="flex gap-[3px]">
                  <HeadButton className="w-[68px] border-[#f98100] bg-[#f98100] text-white">
                    <RefreshCw size={10} strokeWidth={2.5} /> Generate
                  </HeadButton>
                  <HeadButton className="w-12 border-[#cfcfcf] bg-white text-[#333]"><FaPrint size={8} /> Print</HeadButton>
                  <HeadButton className="w-14 border-[#cfcfcf] bg-white text-[#333]">
                    <svg viewBox="0 0 10 11" className="h-[11px] w-[9px]" fill="none" stroke="currentColor"><path d="M3 4H1v6h8V4H7M5 8V1M3 3l2-2 2 2" /></svg>
                    Export
                  </HeadButton>
                </div>
                <div className="flex gap-[2px]">
                  <HeadButton className="w-[52px] border-[#cfcfcf] bg-white text-[#333]">
                    <svg viewBox="0 0 10 11" className="h-[10px] w-[9px]" fill="none" stroke="currentColor"><path d="M1 .5h8v10H1ZM3 3h2v2H3ZM6.500 3.500H8M3 7h4M3 8.500h4" /></svg>
                    Draw
                  </HeadButton>
                  <HeadButton className="w-[66px] border-[#dcdcdc] bg-[#f8f8f8] text-[#8c8c8c]">
                    <svg viewBox="0 0 11 11" className="size-[10px]" fill="none" stroke="currentColor"><circle cx="5.500" cy="5.500" r="5" /><path d="M8 3.500c-2-1.500-4 0-4 2s2 3.500 4 2M3 5h3.500M3 6.500h3.500" strokeWidth="0.800" /></svg>
                    Estimate
                  </HeadButton>
                </div>
                <div className="flex gap-[3px]">
                  <HeadButton className="w-[60px] border-[#cfcfcf] bg-white text-[#333]"><FaCog size={9} /> Options</HeadButton>
                  <HeadButton label="Help" className="w-[27px] border-[#cfcfcf] bg-white text-[#222]"><FaQuestionCircle size={9} /></HeadButton>
                  <HeadButton label="More actions" className="w-9 border-[#cfcfcf] bg-white text-[#222]">
                    <svg viewBox="0 0 3 10" className="h-[10px] w-[3px]" fill="currentColor"><path d="M.5 0h2v2h-2ZM.5 4h2v2h-2ZM.5 8h2v2h-2Z" /></svg>
                    <FaCaretDown size={10} />
                  </HeadButton>
                </div>
              </div>
            </div>
            <div className="-mb-px flex h-7 w-[132px] items-center border border-b-0 border-[#dedede] bg-white pl-[6px] text-[9px] text-[#333]">
              <strong>Untitled.skp</strong>
              <span className="ml-[9px] border-l border-[#ddd] pl-[9px] text-[8px]">Millimeter</span>
              <Pencil size={8} className="ml-1 text-[#c4c4c4]" fill="currentColor" />
            </div>
          </div>
          <div className="min-h-0 flex-1 overflow-hidden px-[15px]">
            <table className="-mt-[7px] w-full table-fixed border-collapse text-[11px] leading-4 text-[#333]">
              <colgroup>
                <col className="w-[42px]" />
                <col />
                <col className="w-[68px]" />
                <col className="w-[68px]" />
                <col className="w-[69px]" />
                <col className="w-[68px]" />
              </colgroup>
              <tbody>
                {PARTS.map((part) => (
                  <PartRow key={part.letter} part={part} />
                ))}
                <tr className="h-[41px]">
                  {[0, 1, 2, 3, 4, 5].map((i) => (
                    <td key={i} className="border-x border-[#dcdcdc]" />
                  ))}
                </tr>
              </tbody>
            </table>
          </div>
        </div>
        <div className="flex w-3 shrink-0 flex-col items-center bg-[#fafafa] pt-1 text-[#808080]">
          <svg viewBox="0 0 8 6" className="h-[6px] w-2" fill="currentColor"><path d="M4 0 8 6H0Z" /></svg>
          <span className="flex-[134]" />
          <span className="h-[63px] w-[7px] rounded-full bg-[#858585]" />
          <span className="flex-[65]" />
          <svg viewBox="0 0 8 6" className="mb-px h-[6px] w-2" fill="currentColor"><path d="M4 6 0 0h8Z" /></svg>
        </div>
      </div>
    </section>
  );
}

export default function App() {
  return (
    <div className="relative flex h-screen flex-col overflow-hidden bg-[#f1f1f6] font-['Open_Sans','Noto_Sans',sans-serif]">
      <TitleBar />
      <Toolbars />
      <div className="flex min-h-0 flex-1">
        <Palette />
        <Viewport />
        <Tray />
      </div>
      <StatusBar />
      <CutListWindow />
    </div>
  );
}
